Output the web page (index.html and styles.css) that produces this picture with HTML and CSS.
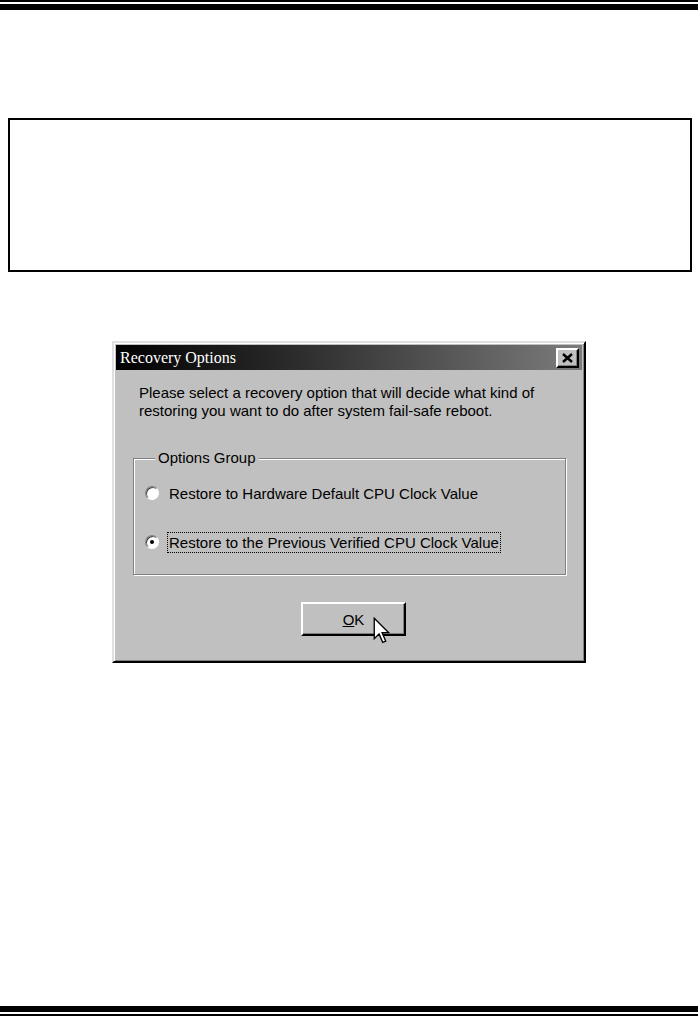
FILE: index.html
```html
<!DOCTYPE html>
<html lang="en">
<head>
    <meta charset="UTF-8">
    <title>Recovery Options</title>
    <link rel="stylesheet" href="styles.css">
</head>
<body>
    <div class="page">
        <!-- Page header rule -->
        <div class="rule rule-top">
            <div class="line-thin"></div>
            <div class="line-thick"></div>
        </div>

        <!-- Empty framed note box -->
        <div class="note-box"></div>

        <!-- Screenshot of the dialog -->
        <div class="dialog">
            <div class="title-bar">
                <span class="title-text">Recovery Options</span>
                <span class="close-btn">
                    <svg width="11" height="10" viewBox="0 0 11 10">
                        <path d="M1 1 L10 9 M10 1 L1 9" stroke="#000" stroke-width="2.4" fill="none"/>
                    </svg>
                </span>
            </div>

            <div class="dialog-body">
                <p class="intro">Please select a recovery option that will decide what kind of<br>restoring you want to do after system fail-safe reboot.</p>

                <fieldset class="group">
                    <legend>Options Group</legend>
                    <div class="option">
                        <span class="radio"></span>
                        <span class="label">Restore to Hardware Default CPU Clock Value</span>
                    </div>
                    <div class="option">
                        <span class="radio checked"></span>
                        <span class="label focused">Restore to the Previous Verified CPU Clock Value</span>
                    </div>
                </fieldset>

                <div class="button-row">
                    <div class="ok-btn"><u>O</u>K
                        <!-- mouse pointer over the button -->
                        <svg class="cursor" width="17" height="29" viewBox="0 0 14 24">
                            <path d="M1 1 L1 18 L5 14 L8 21 L10.5 20 L7.5 13 L13 13 Z" fill="#fff" stroke="#000" stroke-width="1.1" stroke-linejoin="miter"/>
                        </svg>
                    </div>
                </div>
            </div>
        </div>

        <!-- Page footer rule -->
        <div class="rule rule-bottom">
            <div class="line-thick"></div>
            <div class="line-thin"></div>
        </div>
    </div>
</body>
</html>
```

FILE: styles.css
```css
/* General */
body {
    margin: 0;
    background: #fff;
    font-family: "Liberation Sans", Arial, sans-serif;
}

.page {
    display: flex;
    flex-direction: column;
    min-height: 100vh;
}

/* Header / footer rules */
.rule {
    display: flex;
    flex-direction: column;
    gap: 2px;
}

.line-thin {
    height: 2px;
    background: #000;
}

.line-thick {
    height: 6px;
    background: #000;
}

.rule-bottom {
    margin-top: auto;
}

/* Empty box */
.note-box {
    margin: 108px 6px 0 8px;
    height: 150px;
    border: 2px solid #000;
}

/* Dialog window */
.dialog {
    width: 466px;
    margin: 69px auto 0;
    padding: 2px;
    background: #c0c0c0;
    border: 2px solid;
    border-color: #dfdfdf #000 #000 #dfdfdf;
    box-shadow: inset 1px 1px 0 #fff, inset -1px -1px 0 #808080;
}

.title-bar {
    height: 25px;
    display: flex;
    align-items: center;
    justify-content: space-between;
    padding: 0 3px 0 4px;
    background: linear-gradient(90deg, #000 0%, #2e2e2e 40%, #7c7c7c 100%);
}

.title-text {
    color: #fff;
    font-family: "Liberation Serif", "Times New Roman", serif;
    font-size: 16px;
}

.close-btn {
    width: 19px;
    height: 16px;
    display: flex;
    align-items: center;
    justify-content: center;
    background: #c0c0c0;
    border: 2px solid;
    border-color: #fff #000 #000 #fff;
    box-shadow: inset -1px -1px 0 #808080;
}

.dialog-body {
    padding: 14px 0 23px 17px;
    font-size: 15px;
    color: #000;
}

.intro {
    margin: 0 0 0 6px;
    line-height: 18px;
}

/* Group box */
.group {
    width: 433px;
    height: 125px;
    box-sizing: border-box;
    margin: 30px 0 0 0;
    padding: 16px 0 0 12px;
    border: 1px solid #808080;
    box-shadow: inset 1px 1px 0 #fff, 1px 1px 0 #fff;
    display: flex;
    flex-direction: column;
    gap: 27px;
}

.group legend {
    padding: 0 3px;
    margin-left: 9px;
    line-height: 16px;
    background: #c0c0c0;
}

.option {
    display: flex;
    align-items: center;
    gap: 9px;
    height: 22px;
}

.radio {
    width: 12px;
    height: 12px;
    margin-left: -1px;
    border-radius: 50%;
    background: #fff;
    border: 1px solid;
    border-color: #808080 #fff #fff #808080;
    box-shadow: inset 1px 1px 0 #404040;
    display: flex;
    align-items: center;
    justify-content: center;
}

.radio.checked::after {
    content: "";
    width: 4px;
    height: 4px;
    border-radius: 50%;
    background: #000;
}

.label {
    padding: 1px 1px;
}

.label.focused {
    outline: 1px dotted #000;
}

/* Button */
.button-row {
    display: flex;
    padding-left: 168px;
    margin-top: 27px;
}

.ok-btn {
    position: relative;
    width: 105px;
    height: 34px;
    box-sizing: border-box;
    display: flex;
    align-items: center;
    justify-content: center;
    background: #c0c0c0;
    border: 2px solid;
    border-color: #fff #000 #000 #fff;
    box-shadow: inset -1px -1px 0 #808080;
}

.cursor {
    position: absolute;
    left: 70px;
    top: 13px;
}
```
